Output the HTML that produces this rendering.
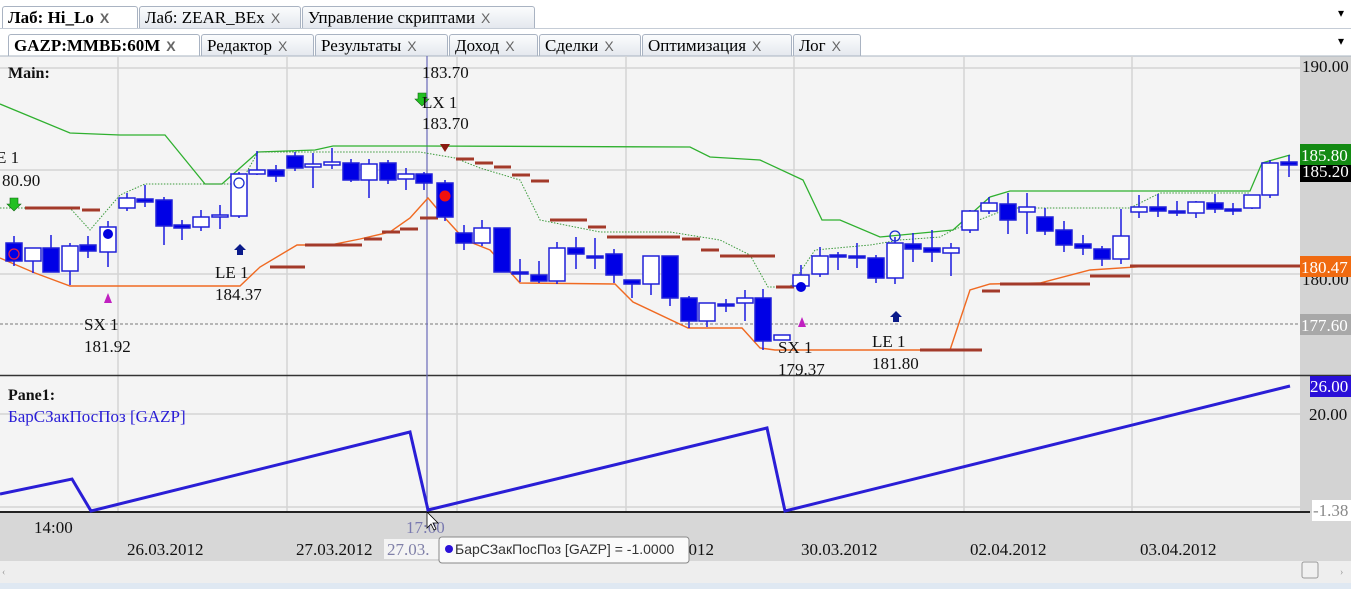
<!DOCTYPE html>
<html><head><meta charset="utf-8"><style>
body{margin:0;width:1351px;height:589px;overflow:hidden;background:#fff;font-family:"Liberation Serif","DejaVu Serif",serif;position:relative}
.tab{position:absolute;height:22px;border:1px solid #a9b3c2;border-bottom:none;background:linear-gradient(#fbfcfd,#e4e8ee);font-size:17px;line-height:22px;padding:0 5px;box-sizing:border-box;color:#000;white-space:nowrap;border-radius:3px 3px 0 0;overflow:hidden}
.tab .x{color:#666;font-family:"Liberation Sans",sans-serif;font-size:14px;margin-left:6px}
.act{background:#fff;font-weight:bold}
</style></head><body>
<div class="tab act" style="left:2px;top:6px;width:136px">Лаб: Hi_Lo<span class="x">X</span></div>
<div class="tab" style="left:139px;top:6px;width:162px">Лаб: ZEAR_BEx<span class="x">X</span></div>
<div class="tab" style="left:302px;top:6px;width:233px">Управление скриптами<span class="x">X</span></div>
<div style="position:absolute;left:0;top:28px;width:1351px;height:5px;background:#fff;border-top:1px solid #c5ccd6"></div>
<div style="position:absolute;left:1338px;top:6px;font-size:12px">▾</div>
<div class="tab act" style="left:8px;top:34px;width:192px">GAZP:ММВБ:60M<span class="x">X</span></div>
<div class="tab" style="left:201px;top:34px;width:113px">Редактор<span class="x">X</span></div>
<div class="tab" style="left:315px;top:34px;width:133px">Результаты<span class="x">X</span></div>
<div class="tab" style="left:449px;top:34px;width:89px">Доход<span class="x">X</span></div>
<div class="tab" style="left:539px;top:34px;width:102px">Сделки<span class="x">X</span></div>
<div class="tab" style="left:642px;top:34px;width:150px">Оптимизация<span class="x">X</span></div>
<div class="tab" style="left:793px;top:34px;width:68px">Лог<span class="x">X</span></div>
<div style="position:absolute;left:1338px;top:34px;font-size:12px">▾</div>
<svg id="s" width="1351" height="589" style="position:absolute;left:0;top:0" xmlns="http://www.w3.org/2000/svg" font-family="Liberation Serif,serif">
<rect x="0" y="56" width="1300" height="457" fill="#f4f4f4"/>
<rect x="1300" y="56" width="51" height="457" fill="#d3d3d3"/>
<rect x="0" y="513" width="1351" height="48" fill="#d7d7d7"/>
<rect x="0" y="561" width="1351" height="22" fill="#eeeeee"/>
<rect x="0" y="583" width="1351" height="6" fill="#dfe8f2"/>
<line x1="0" y1="56" x2="1351" y2="56" stroke="#aab4c2"/>
<g stroke="#d4d4d4" stroke-width="1.5">
<line x1="118" y1="56" x2="118" y2="513"/><line x1="287" y1="56" x2="287" y2="513"/><line x1="457" y1="56" x2="457" y2="513"/><line x1="626" y1="56" x2="626" y2="513"/><line x1="794" y1="56" x2="794" y2="513"/><line x1="964" y1="56" x2="964" y2="513"/><line x1="1132" y1="56" x2="1132" y2="513"/>
<line x1="0" y1="68" x2="1300" y2="68"/><line x1="0" y1="170" x2="1300" y2="170"/><line x1="0" y1="274" x2="1300" y2="274"/><line x1="0" y1="414" x2="1300" y2="414"/><line x1="0" y1="507" x2="1300" y2="507"/>
</g>
<line x1="0" y1="324" x2="1300" y2="324" stroke="#777" stroke-dasharray="3,2"/>
<line x1="0" y1="375.5" x2="1351" y2="375.5" stroke="#333" stroke-width="1.5"/>
<line x1="0" y1="512" x2="1310" y2="512" stroke="#222" stroke-width="2"/>
<line x1="427" y1="56" x2="427" y2="513" stroke="#6a6ab8" stroke-width="1.2"/>
<g fill="none">
<polyline stroke="#2fb02f" stroke-width="1.3" points="0,104 70,133 120,135 165,135 205,184 222,184 258,152 315,150 333,146 420,146 690,147 710,157 760,160 803,180 822,220 840,220 880,237 953,230 990,197 1010,191 1250,191 1262,163 1290,155"/>
<polyline stroke="#3c9a3c" stroke-width="1" stroke-dasharray="1.5,1.5" points="0,208 70,208 90,230 120,195 145,184 240,184 258,152 420,152 455,158 480,168 520,180 540,220 600,232 670,232 720,240 750,255 768,287 790,287 815,250 870,245 900,240 940,237 953,230 1010,208 1130,208 1160,193 1250,193"/>
<polyline stroke="#f06a22" stroke-width="1.4" points="0,258 35,273 70,286 240,286 260,267 297,245 330,245 360,239 390,232 410,218 428,198 445,218 465,240 490,250 520,283 615,284 633,302 688,328 742,328 760,348 775,350 950,350 970,290 990,284 1040,283 1090,270 1150,266 1300,266"/>
</g>
<g stroke="#a33a2a" stroke-width="3">
<line x1="25" y1="208" x2="80" y2="208"/><line x1="82" y1="210" x2="100" y2="210"/><line x1="270" y1="267" x2="305" y2="267"/><line x1="305" y1="245" x2="362" y2="245"/><line x1="364" y1="239" x2="382" y2="239"/><line x1="382" y1="232" x2="400" y2="232"/><line x1="400" y1="229" x2="418" y2="229"/><line x1="420" y1="218" x2="438" y2="218"/>
<line x1="456" y1="159" x2="474" y2="159"/><line x1="475" y1="163" x2="493" y2="163"/><line x1="494" y1="167" x2="511" y2="167"/><line x1="512" y1="175" x2="530" y2="175"/><line x1="531" y1="181" x2="549" y2="181"/><line x1="550" y1="220" x2="587" y2="220"/><line x1="588" y1="227" x2="606" y2="227"/><line x1="607" y1="237" x2="680" y2="237"/><line x1="682" y1="239" x2="700" y2="239"/><line x1="701" y1="250" x2="719" y2="250"/><line x1="720" y1="256" x2="775" y2="256"/><line x1="776" y1="287" x2="794" y2="287"/>
<line x1="982" y1="291" x2="1000" y2="291"/><line x1="1000" y1="284" x2="1090" y2="284"/><line x1="1090" y1="276" x2="1130" y2="276"/><line x1="1130" y1="266" x2="1300" y2="266"/><line x1="920" y1="350" x2="982" y2="350"/>
</g>
<g id="c"></g>
<polyline fill="none" stroke="#2a1ed6" stroke-width="3" points="0,494 72,479 91,511 410,432 428,510 767,428 785,511 1290,386"/>
<circle cx="14" cy="254" r="5" fill="none" stroke="#e0204a" stroke-width="1.3"/>
<circle cx="108" cy="234" r="5" fill="#0000e0"/>
<circle cx="239" cy="183" r="5" fill="none" stroke="#1a2ed0" stroke-width="1.3"/>
<circle cx="445" cy="196" r="5.5" fill="#f01010"/>
<circle cx="801" cy="287" r="5" fill="#0000e0"/>
<circle cx="895" cy="236" r="5" fill="none" stroke="#1a2ed0" stroke-width="1.3"/>
<path d="M10,198h8v6h3l-7,7l-7,-7h3z" fill="#22c022" stroke="#116611" stroke-width=".6"/>
<path d="M418,93h8v6h3l-7,7l-7,-7h3z" fill="#22c022" stroke="#116611" stroke-width=".6"/>
<path d="M440,144h10l-5,8z" fill="#8a1a10"/>
<path d="M240,244l6,6h-3v5h-6v-5h-3z" fill="#0a1a8a"/>
<path d="M896,311l6,6h-3v5h-6v-5h-3z" fill="#0a1a8a"/>
<path d="M108,293l4,10h-8z" fill="#c020c0"/>
<path d="M802,317l4,10h-8z" fill="#c020c0"/>
<g font-size="17" fill="#111">
<text x="8" y="78" font-weight="bold" font-size="16">Main:</text>
<text x="422" y="78">183.70</text><text x="422" y="108">LX 1</text><text x="422" y="129">183.70</text>
<text x="-4" y="163">E 1</text><text x="2" y="186">80.90</text>
<text x="215" y="278">LE 1</text><text x="215" y="300">184.37</text>
<text x="84" y="330">SX 1</text><text x="84" y="352">181.92</text>
<text x="778" y="353">SX 1</text><text x="778" y="375">179.37</text>
<text x="872" y="347">LE 1</text><text x="872" y="369">181.80</text>
<text x="8" y="400" font-weight="bold" font-size="16">Pane1:</text>
<text x="8" y="422" fill="#2a1ed6">БарСЗакПосПоз [GAZP]</text>
<text x="1302" y="72">190.00</text>
<rect x="1300" y="160" width="51" height="22" fill="#000"/><text x="1302" y="177" fill="#fff">185.20</text>
<rect x="1300" y="144" width="51" height="21" fill="#138a13"/><text x="1301" y="161" fill="#fff">185.80</text>
<text x="1302" y="285">180.00</text>
<rect x="1300" y="256" width="51" height="21" fill="#f06a10"/><text x="1301" y="273" fill="#fff">180.47</text>
<rect x="1300" y="314" width="51" height="21" fill="#a8a8a8"/><text x="1301" y="331" fill="#fff">177.60</text>
<rect x="1310" y="376" width="41" height="21" fill="#2a10d8"/><text x="1310" y="392" fill="#fff">26.00</text>
<text x="1309" y="420">20.00</text>
<rect x="1312" y="500" width="39" height="21" fill="#fff"/><text x="1313" y="516" fill="#888">-1.38</text>
<text x="34" y="533">14:00</text>
<text x="406" y="533" fill="#7a7ab0">17:00</text>
<text x="127" y="555">26.03.2012</text><text x="296" y="555">27.03.2012</text>
<rect x="384" y="539" width="60" height="20" fill="#f4f4f4"/><text x="387" y="555" fill="#8080a8">27.03.</text>
<text x="680" y="555">2012</text>
<text x="801" y="555">30.03.2012</text><text x="970" y="555">02.04.2012</text><text x="1140" y="555">03.04.2012</text>
</g>
<rect x="439" y="537" width="250" height="26" rx="3" fill="#fafafa" stroke="#888"/>
<circle cx="449" cy="549" r="4" fill="#2a10d8"/>
<text x="455" y="554" font-family="Liberation Sans,sans-serif" font-size="14" fill="#333">БарСЗакПосПоз [GAZP] = -1.0000</text>
<path d="M427,512v16l4,-4l3,6l2,-1l-3,-6h5z" fill="#fff" stroke="#000" stroke-width=".8"/>
<rect x="1302" y="562" width="16" height="16" rx="2" fill="#f0f0f0" stroke="#999"/>
<text x="2" y="575" font-size="10" fill="#999">‹</text><text x="1340" y="575" font-size="10" fill="#999">›</text>
</svg>
<script>
var d=[[14,243,261,236,266,1],[33,248,261,248,273,0],[51,248,272,235,272,1],[70,246,271,243,285,0],[88,245,251,236,258,1],[108,227,252,221,267,0],[127,198,208,193,211,0],[145,199,202,185,207,1],[164,200,226,197,245,1],[182,225,228,220,240,1],[201,217,227,210,231,0],[220,215,216,205,229,0],[239,174,216,172,218,0],[257,170,174,151,175,0],[276,170,176,165,182,1],[295,156,168,152,171,1],[313,164,167,153,188,0],[332,162,165,148,169,0],[351,163,180,159,182,1],[369,164,180,159,198,0],[388,163,180,160,184,1],[406,174,179,168,190,0],[424,174,183,172,190,1],[445,183,217,180,221,1],[464,233,243,225,250,1],[482,228,243,220,246,0],[502,228,272,228,272,1],[520,272,274,259,282,1],[539,275,281,261,283,1],[557,248,281,242,284,0],[576,248,254,237,269,1],[595,256,257,238,269,1],[614,254,275,249,283,1],[632,280,284,280,298,1],[651,256,284,256,295,0],[670,256,298,256,306,1],[689,298,321,296,328,1],[707,303,321,303,327,0],[726,304,306,299,312,1],[745,298,303,290,321,0],[763,298,341,289,350,1],[782,335,340,335,340,0],[801,275,286,265,290,0],[820,256,274,247,277,0],[838,255,257,252,270,1],[857,256,258,243,268,1],[876,258,278,255,283,1],[895,243,278,237,284,0],[913,244,249,233,262,1],[932,248,252,230,262,1],[951,248,253,243,276,0],[970,211,230,210,233,0],[989,203,211,197,214,0],[1008,204,220,193,234,1],[1027,207,212,193,234,0],[1045,217,231,208,235,1],[1064,230,245,221,252,1],[1083,244,248,235,255,1],[1102,249,259,246,266,1],[1121,236,259,209,264,0],[1139,207,212,195,218,0],[1158,207,211,194,217,1],[1177,211,212,201,216,1],[1196,202,213,201,218,0],[1215,203,209,194,213,1],[1233,209,210,203,215,1],[1252,195,208,195,209,0],[1270,163,195,160,198,0],[1289,162,165,155,177,1]];
var h='';d.forEach(function(c){var x=c[0],t=c[1],b=c[2];h+='<line x1="'+x+'" y1="'+c[3]+'" x2="'+x+'" y2="'+c[4]+'" stroke="#1a1ae0" stroke-width="1.5"/>';
h+='<rect x="'+(x-8)+'" y="'+t+'" width="16" height="'+Math.max(b-t,2)+'" fill="'+(c[5]?'#0000e6':'#fff')+'" stroke="#2020d8" stroke-width="1.5"/>';});
document.getElementById('c').innerHTML=h;
</script>
</body></html>
